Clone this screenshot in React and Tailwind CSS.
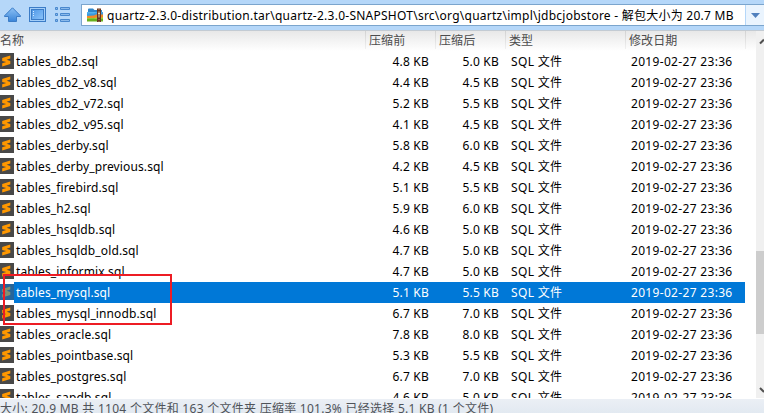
const files = [
  ["tables_db2.sql", "4.8 KB", "5.0 KB"],
  ["tables_db2_v8.sql", "4.4 KB", "4.5 KB"],
  ["tables_db2_v72.sql", "5.2 KB", "5.5 KB"],
  ["tables_db2_v95.sql", "4.1 KB", "4.5 KB"],
  ["tables_derby.sql", "5.8 KB", "6.0 KB"],
  ["tables_derby_previous.sql", "4.2 KB", "4.5 KB"],
  ["tables_firebird.sql", "5.1 KB", "5.5 KB"],
  ["tables_h2.sql", "5.9 KB", "6.0 KB"],
  ["tables_hsqldb.sql", "4.6 KB", "5.0 KB"],
  ["tables_hsqldb_old.sql", "4.7 KB", "5.0 KB"],
  ["tables_informix.sql", "4.7 KB", "5.0 KB"],
  ["tables_mysql.sql", "5.1 KB", "5.5 KB"],
  ["tables_mysql_innodb.sql", "6.7 KB", "7.0 KB"],
  ["tables_oracle.sql", "7.8 KB", "8.0 KB"],
  ["tables_pointbase.sql", "5.3 KB", "5.5 KB"],
  ["tables_postgres.sql", "6.7 KB", "7.0 KB"],
  ["tables_sapdb.sql", "4.6 KB", "5.0 KB"],
];

const SELECTED = "tables_mysql.sql";

function SqlIcon({ dim }) {
  return (
    <svg width="14" height="16" viewBox="0 0 14 16" className="block shrink-0">
      <rect width="14" height="16" fill={dim ? "#26659a" : "#484848"} />
      <path
        d="M10.3 2.6 L2.2 5 V7.9 L6.2 9.1 L2.2 10.3 V13.4 L10.3 11 V7.9 L6.6 6.8 L10.3 5.6Z"
        fill={dim ? "#809273" : "#ff9800"}
      />
    </svg>
  );
}

function UpIcon() {
  return (
    <svg width="18" height="17" viewBox="0 0 18 17">
      <defs>
        <linearGradient id="up" x2="0" y2="1">
          <stop stopColor="#8cc1f5" />
          <stop offset="1" stopColor="#3984d8" />
        </linearGradient>
      </defs>
      <path d="M8.5 .8 L16.5 8.8 V9.5 H12.5 V14.5 H4.5 V9.5 H.5 V8.8Z" fill="url(#up)" stroke="#3b7cc7" strokeLinejoin="round" />
    </svg>
  );
}

function ViewIcon() {
  return (
    <svg width="17" height="15" viewBox="0 0 17 15">
      <defs>
        <linearGradient id="view" x2="1" y2="1">
          <stop stopColor="#4e97e6" />
          <stop offset="1" stopColor="#8cc4fa" />
        </linearGradient>
      </defs>
      <rect x=".5" y=".5" width="16" height="14" fill="#a3cef8" stroke="#3b7cc7" />
      <rect x="2.5" y="2.5" width="12" height="10" fill="url(#view)" stroke="#3b7cc7" />
      <path d="M4.5 4v6" stroke="#d4eaff" strokeDasharray="1 1" />
    </svg>
  );
}

function ListIcon() {
  return (
    <svg width="16" height="16" viewBox="0 0 16 16" fill="#8ab9ea" stroke="#4988ce">
      <path d="M.5.5h2v2h-2zM5.5.5h9v2h-9zM.5 6.5h2v2h-2zM5.5 6.5h9v2h-9zM.5 12.5h2v2h-2zM5.5 12.5h9v2h-9z" />
    </svg>
  );
}

function ArchiveIcon() {
  return (
    <svg width="17" height="15" viewBox="0 0 17 15">
      <path d="M1 4V1.5Q1 .5 2 .5h4l1.5 1.5H15v3H1z" fill="#2f86c9" />
      <path d="M0 4h16v3H0z" fill="#55b4ee" />
      <path d="M0 5.5h7l2-1h7V10H0z" fill="#3a9ade" />
      <path d="M0 8l7-.5 2-1h7V10H0z" fill="#f28a25" />
      <path d="M0 10h16v3.5H0z" fill="#68b01f" />
      <path d="M0 10l7 .2 2-.8h7v1.4H0z" fill="#a5d93f" />
      <path d="M10 .5h4V14h-4z" fill="#68351e" />
      <path d="M12 1v13" stroke="#b08a62" strokeDasharray="1 1" />
      <path d="M11 4.5h2v4h-2z" fill="#f0d7a6" />
      <path d="M11.5 6h1v2h-1z" fill="#68351e" />
    </svg>
  );
}

function HeadCell({ className, children }) {
  return (
    <div className={`relative flex items-center pl-[4px] tracking-[0.1px] ${className}`}>
      <span className="absolute top-0 left-0 h-[18px] w-px bg-linear-to-b from-[#d2d2d2] to-[#f0f0f0]" />
      {children}
    </div>
  );
}

function Row({ file }) {
  const [name, size, packed] = file;
  const on = name === SELECTED;
  return (
    <div className={`flex h-[21px] shrink-0 ${on ? "text-white" : "text-black"}`}>
      <div className="w-[14px] shrink-0 pt-[2px]">
        <SqlIcon dim={on} />
      </div>
      <div className={`flex w-[731px] shrink-0 items-center ${on ? "bg-[#0078d7]" : ""}`}>
        <span className="w-[351px] pl-[2px] tracking-[0.12px]">{name}</span>
        <span className="w-[64px] text-right tracking-[0.2px]">{size}</span>
        <span className="w-[70px] text-right tracking-[0.2px]">{packed}</span>
        <span className="w-[120px] pl-[12px] tracking-[0.35px]">SQL 文件</span>
        <span className="pl-[12px] tracking-[0.32px]">2019-02-27 23:36</span>
      </div>
    </div>
  );
}

export default function App() {
  return (
    <div className="relative flex h-[413px] w-[764px] flex-col overflow-hidden whitespace-nowrap bg-white font-['Noto_Sans','Noto_Sans_CJK_SC',sans-serif] text-[12px] leading-[20px]">
      <div className="flex h-[30px] shrink-0 bg-[#b5d7f9]">
        <div className="flex w-[81px] items-start pt-[7px] pl-[4px]">
          <UpIcon />
          <span className="ml-[7px]">
            <ViewIcon />
          </span>
          <span className="ml-[9px]">
            <ListIcon />
          </span>
        </div>
        <div className="mt-[4px] flex h-[22px] w-[683px] items-center border border-r-0 border-[#7ba5cd] bg-white text-black">
          <span className="ml-[5px] w-[20px]">
            <ArchiveIcon />
          </span>
          <span className="w-[638px] pt-[2px] tracking-[0.25px]">
            {"quartz-2.3.0-distribution.tar\\quartz-2.3.0-SNAPSHOT\\src\\org\\quartz\\impl\\jdbcjobstore - 解包大小为 20.7 MB"}
          </span>
          <span className="flex h-full flex-1 items-center justify-center border-l border-[#b5d7f9] bg-[#eaf4fe]">
            <svg width="9" height="5" viewBox="0 0 9 5">
              <path d="M0 0h9L4.5 5z" fill="#5080bd" />
            </svg>
          </span>
        </div>
      </div>

      <div className="flex h-[368px] shrink-0">
        <div className="flex w-[756px] shrink-0 flex-col overflow-hidden">
          <div className="flex h-[21px] shrink-0 border-t border-[#c3cbd3] bg-linear-to-b from-[#e8e8e8] to-white text-[#4c4c4c]">
            <div className="flex w-[365px] items-center">名称</div>
            <HeadCell className="w-[70px]">压缩前</HeadCell>
            <HeadCell className="w-[70px]">压缩后</HeadCell>
            <HeadCell className="w-[120px]">类型</HeadCell>
            <HeadCell className="w-[120px]">修改日期</HeadCell>
            <HeadCell className="w-[10px]" />
          </div>
          {files.map((f) => (
            <Row key={f[0]} file={f} />
          ))}
        </div>
        <div className="flex w-[8px] flex-col border-t border-[#c3cbd3] bg-[#f0f0f0]">
          <svg width="8" height="17" viewBox="0 0 8 17" className="mt-[3px]">
            <path d="M4 9.5L8 5.5" stroke="#505050" strokeWidth="2" />
          </svg>
          <div className="mt-[200px] h-[83px] bg-[#cdcdcd]" />
          <svg width="8" height="12" viewBox="0 0 8 12" className="mt-[49px]">
            <path d="M4 5L8 9" stroke="#505050" strokeWidth="2" />
          </svg>
        </div>
      </div>

      <div className="mt-[1px] h-[14px] shrink-0 overflow-hidden bg-linear-to-b from-[#ebeff5] to-[#e2e9f1] tracking-[0.27px] text-[#4f5359]">
        大小: 20.9 MB 共 1104 个文件和 163 个文件夹 压缩率 101.3% 已经选择 5.1 KB (1 个文件)
      </div>

      <div className="absolute top-[274px] left-[3px] h-[51px] w-[169px] border-2 border-[#ed1c24]" />
    </div>
  );
}
